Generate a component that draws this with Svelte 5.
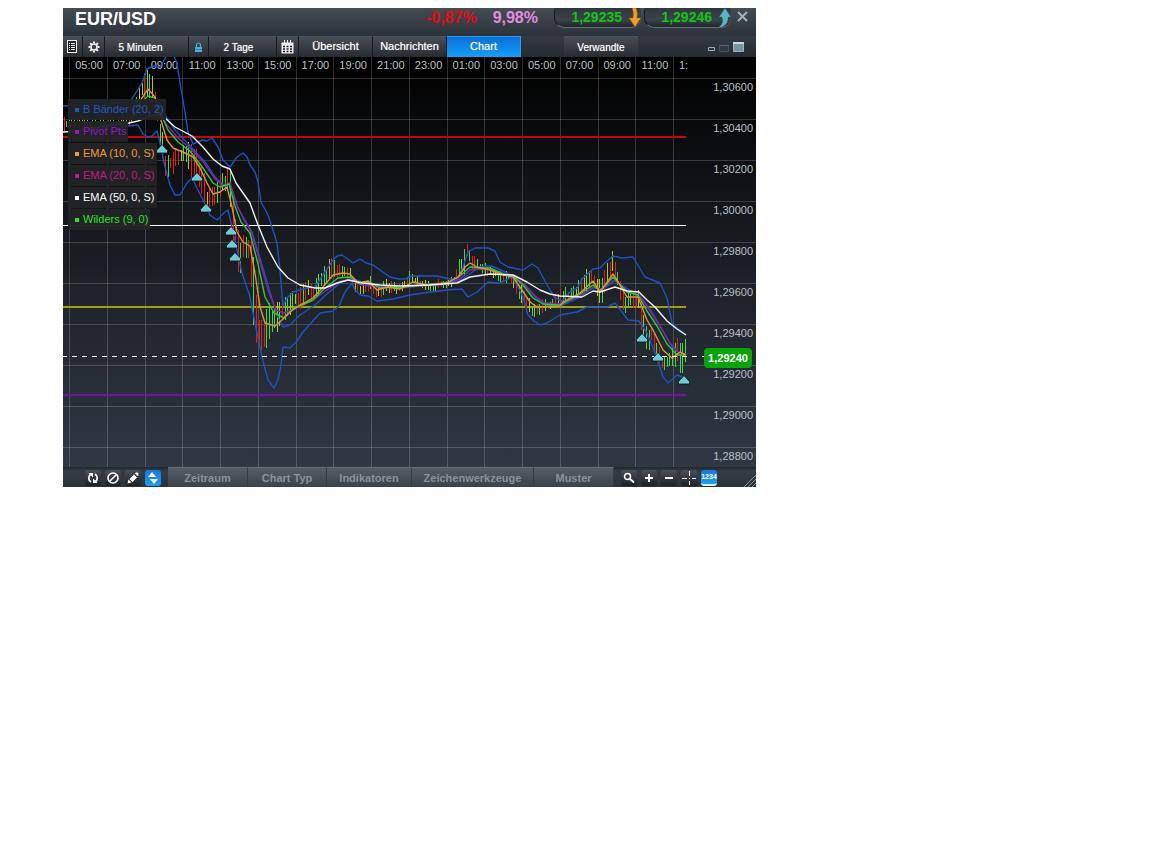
<script>
  let activeTab = 'Chart';
  const tabs = ['Übersicht', 'Nachrichten', 'Chart'];

  const menus = [
    { label: 'Zeitraum', width: 80 },
    { label: 'Chart Typ', width: 79 },
    { label: 'Indikatoren', width: 85 },
    { label: 'Zeichenwerkzeuge', width: 122 },
    { label: 'Muster', width: 80 },
  ];

  const indicators = [
    { label: 'B Bänder (20, 2)', color: '#2058c4' },
    { label: 'Pivot Pts', color: '#9418c4' },
    { label: 'EMA (10, 0, S)', color: '#f09a3c' },
    { label: 'EMA (20, 0, S)', color: '#c41884' },
    { label: 'EMA (50, 0, S)', color: '#ffffff' },
    { label: 'Wilders (9, 0)', color: '#2fe02f' },
  ];

  const hours = ['05:00', '07:00', '09:00', '11:00', '13:00', '15:00', '17:00', '19:00', '21:00', '23:00', '01:00', '03:00', '05:00', '07:00', '09:00', '11:00'];
  const prices = ['1,30600', '1,30400', '1,30200', '1,30000', '1,29800', '1,29600', '1,29400', '1,29200', '1,29000', '1,28800'];
  const columns = Array.from({ length: 17 }, (_, i) => Math.round(69 + i * 37.75) + 0.5);

  const pivots = [
    { y: 137, color: '#c80808', width: 2 },
    { y: 225.5, color: '#ffffff', width: 1 },
    { y: 307, color: '#a09c18', width: 2 },
    { y: 395, color: '#7411a4', width: 2 },
  ];

  const lines = [
    { color: '#1c52c8', points: '63,106 110,104 130,102 142,83 147,69 153,66 160,67 164,60 168,52 172,52 177,63 180,83 185,112 188,132 193,144 202,140 207,141 212,138 218,147 223,160 230,167 237,157 243,153 247,157 250,165 255,172 258,182 261,202 268,215 273,230 277,243 280,270 283,306 287,298 293,292 307,288 315,287 323,275 333,260 337,256 342,255 348,259 353,263 360,259 366,263 373,265 383,272 390,277 399,279 405,279 412,276 437,276 450,279 458,279 463,267 468,252 475,248 488,248 495,251 500,262 508,267 523,270 532,264 538,268 547,285 555,298 562,301 570,292 577,288 583,278 593,269 600,268 606,262 613,256 622,258 633,257 645,277 660,283 667,298 672,323 677,328 686,335' },
    { color: '#1c52c8', points: '128,126 138,125 143,134 148,137 152,136 157,131 160,143 165,167 170,185 175,195 180,195 187,183 192,178 203,200 210,215 217,220 225,212 228,210 232,227 242,273 250,297 255,323 262,357 268,380 274,388 278,380 281,365 283,347 290,348 297,341 303,332 312,322 320,313 333,311 339,306 345,292 352,283 355,290 360,295 368,296 377,301 393,299 410,295 423,293 447,290 462,289 468,297 477,292 488,282 500,283 512,277 518,287 523,297 528,315 534,321 540,325 547,323 560,315 577,312 587,307 607,307 615,303 622,312 628,320 639,321 647,333 655,353 663,377 668,383 677,375 682,377' },
    { color: '#1c52c8', points: '158,103 165,115 175,130 190,146 205,162 215,177 224,186 230,184 238,208 252,232 262,265 270,292 277,315 283,327 290,325 300,315 315,305 328,293 340,283 352,278 363,283 380,286 400,288 420,285 447,283 460,281 468,275 480,267 492,266 505,272 515,277 526,287 538,300 548,305 560,306 580,297 593,288 603,289 615,281 628,289 640,296 652,312 663,331 672,347 680,354 686,355' },
    { color: '#8c1fa8', points: '150,100 158,106 166,124 178,138 191,149 204,163 215,179 222,185 230,183 237,205 244,220 251,231 260,262 269,293 276,310 284,313 294,309 313,300 327,290 340,281 352,280 362,285 380,287 400,288 420,286 447,284 460,279 470,270 481,269 492,269 505,274 515,277 525,285 535,296 545,303 560,304 580,296 593,287 601,290 614,280 628,291 640,296 650,311 660,326 670,343 679,353 686,354' },
    { color: '#28d028', points: '143,101 148,96 155,98 160,112 168,130 178,142 190,151 203,168 213,183 220,187 229,184 235,206 241,222 250,233 258,264 265,297 274,313 284,318 293,309 313,300 325,288 338,278 350,277 360,284 370,282 380,288 393,287 400,288 410,286 425,285 447,283 460,276 470,267 480,268 490,268 503,274 513,276 523,285 533,298 543,304 560,305 580,294 593,285 600,291 613,277 627,292 638,295 647,311 657,326 667,344 677,355 686,355' },
    { color: '#e09434', points: '138,108 142,98 148,89 155,97 160,117 167,140 173,148 183,152 193,157 200,168 207,183 213,194 220,192 227,187 232,207 237,232 243,242 250,246 255,273 260,307 265,323 275,326 282,320 290,312 300,305 313,298 323,287 333,275 343,273 350,274 358,283 368,281 377,290 387,287 400,289 413,282 427,285 447,283 458,277 465,267 470,263 477,267 490,270 503,275 513,277 522,290 530,302 537,307 560,306 563,302 580,293 593,281 600,292 613,274 617,280 627,297 638,297 647,320 653,330 663,350 672,358 680,352 686,355' },
    { color: '#f0f2f2', points: '63,132 80,131 105,126 129,123 138,121 150,116 158,115 165,118 175,127 192,136 203,147 213,159 222,166 230,169 236,183 250,203 258,225 267,247 278,267 288,278 300,285 315,288 325,288 337,283 348,280 363,283 380,285 400,286 430,285 457,283 470,277 490,274 513,275 527,282 540,290 550,294 560,296 582,297 593,291 600,292 615,287 627,291 639,292 647,300 655,307 667,321 677,329 686,335' },
  ];

  // x, high, low
  const range = [
    [63, 117, 132], [72, 117, 127], [129, 119, 127], [134, 105, 122], [138, 86, 118], [143, 65, 100],
    [147, 67, 98], [152, 74, 105], [157, 93, 128], [161, 118, 162], [165, 147, 184], [170, 150, 176],
    [185, 141, 167], [190, 141, 178], [196, 148, 186], [203, 162, 212], [207, 183, 217], [213, 186, 210],
    [220, 174, 200], [228, 166, 192], [231, 172, 238], [235, 208, 264], [240, 238, 278], [243, 232, 264],
    [250, 236, 266], [252, 238, 345], [254, 275, 352], [258, 308, 352], [262, 322, 359], [267, 302, 350],
    [275, 303, 334], [285, 293, 328], [293, 287, 312], [300, 286, 311], [307, 270, 305], [313, 282, 305],
    [320, 270, 296], [327, 260, 286], [333, 255, 278], [340, 263, 282], [348, 261, 284], [356, 283, 296],
    [360, 283, 299], [370, 274, 290], [377, 284, 301], [387, 278, 295], [400, 283, 294], [405, 276, 290],
    [410, 270, 286], [420, 278, 289], [430, 280, 292], [447, 278, 289], [455, 273, 286], [458, 262, 282],
    [464, 243, 276], [467, 238, 260], [472, 252, 273], [480, 260, 274], [490, 266, 277], [500, 269, 284],
    [510, 272, 282], [516, 276, 298], [525, 290, 313], [533, 302, 319], [540, 299, 315], [550, 299, 310],
    [560, 288, 308], [575, 283, 303], [587, 266, 294], [593, 268, 287], [600, 278, 310], [604, 256, 302],
    [610, 260, 282], [613, 244, 278], [618, 271, 293], [624, 288, 319], [630, 289, 308], [638, 287, 308],
    [641, 296, 336], [647, 326, 355], [652, 325, 345], [658, 342, 368], [664, 352, 377], [670, 350, 372],
    [676, 334, 368], [680, 338, 374], [684, 332, 380], [687, 338, 354],
  ];

  const barColors = { up: '#3fdc3f', down: '#e81c10', flat: '#a4d01e' };

  function noise(n) {
    const v = Math.sin(n * 12.9898) * 43758.5453;
    return v - Math.floor(v);
  }

  function between(x) {
    const i = Math.max(1, range.findIndex(r => r[0] >= x));
    const a = range[i - 1];
    const b = range[i];
    const t = (x - a[0]) / (b[0] - a[0]);
    return { high: a[1] + (b[1] - a[1]) * t, low: a[2] + (b[2] - a[2]) * t };
  }

  function buildBars() {
    const bars = [];
    for (let i = 0; 64 + i * 2.6 < 687; i++) {
      const x = Math.floor(64 + i * 2.6);
      const { high, low } = between(x);
      const size = low - high;
      const falling = between(Math.min(x + 3, 687)).high > high + 1;
      const pick = noise(i + 7);
      const kind = pick > 0.76 ? 'flat' : pick > (falling ? 0.5 : 0.32) ? 'up' : 'down';
      bars.push({
        x,
        y: Math.round(high + noise(i) * size * 0.32),
        bottom: Math.round(low - noise(i + 400) * size * 0.32),
        color: barColors[kind],
      });
    }
    return bars;
  }

  const bars = buildBars();

  const markers = [[162, 149], [197, 177], [206, 208], [231, 231], [232, 244], [235, 257], [642, 338], [658, 357], [684, 380]];
</script>

<main class="widget">
  <header>
    <h1>EUR/USD</h1>
    <span class="change down">-0,87%</span>
    <span class="change vola">9,98%</span>
    <button class="price">1,29235
      <svg width="12" height="20" viewBox="0 0 12 20"><path d="M3 0h4q2 4 1 10h4l-6 9-6-9h4q1-6-1-10z" fill="#f0a020" stroke="#8c5410" stroke-width=".5" /></svg>
    </button>
    <button class="price">1,29246
      <svg width="12" height="20" viewBox="0 0 12 20"><path d="M6 0l6 9H9q1 7-6 10H0q5-4 3-10H0z" fill="#58b6c4" stroke="#245e6c" stroke-width=".5" /></svg>
    </button>
    <button class="close" aria-label="Schließen">
      <svg width="11" height="11" viewBox="0 0 11 11"><path d="M1 1l9 9M10 1l-9 9" stroke="#9fb4c2" stroke-width="2" /></svg>
    </button>
  </header>

  <nav class="toolbar">
    <button class="cell list" aria-label="Liste">
      <svg width="12" height="14" viewBox="0 0 12 14"><rect x="1.5" y=".5" width="9" height="12" fill="#222" stroke="#eee" /><path d="M3 3.5h1M5 3.5h4M3 5.5h1M5 5.5h4M3 7.5h1M5 7.5h4M3 9.5h1M5 9.5h4" stroke="#eee" /></svg>
    </button>
    <button class="cell gear" aria-label="Einstellungen">
      <svg width="12" height="12" viewBox="0 0 12 12"><circle cx="6" cy="6" r="3" fill="none" stroke="#eee" stroke-width="1.6" /><path d="M6 .5v2M6 9.5v2M.5 6h2M9.5 6h2M2.1 2.1l1.4 1.4M8.5 8.5l1.4 1.4M9.900 2.100L8.500 3.500M3.500 8.500L2.100 9.900" stroke="#eee" stroke-width="2" /></svg>
    </button>
    <button class="cell interval">5 Minuten</button>
    <button class="cell lock" aria-label="Sperren">
      <svg width="9" height="11" viewBox="0 0 9 11"><path d="M2.5 5V3a2 2 0 014 0v2" fill="none" stroke="#48b0e4" stroke-width="1.2" /><path d="M1 5h7v5H1z" fill="#48b0e4" /><path d="M1 7.500h7" stroke="#2a80b0" /></svg>
    </button>
    <button class="cell span">2 Tage</button>
    <button class="cell calendar" aria-label="Kalender">
      <svg width="13" height="14" viewBox="0 0 13 14"><path d="M.5 2.5h12v11H.5z" fill="#eee" /><path d="M3.5 0v4M6.5 0v4M9.5 0v4" stroke="#eee" /><path d="M2 6.5h2M5.5 6.5h2M9 6.5h2M2 9h2M5.5 9h2M9 9h2M2 11.5h2M5.5 11.5h2M9 11.5h2" stroke="#222" stroke-width="1.5" /></svg>
    </button>
    {#each tabs as tab}
      <button class="cell tab" class:active={tab === activeTab} on:click={() => (activeTab = tab)}>{tab}</button>
    {/each}
    <button class="cell related">Verwandte</button>
    <div class="sizes">
      <button aria-label="Klein"><svg width="7" height="10" viewBox="0 0 7 10"><path d="M.5 5.5h6v3h-6z" fill="none" stroke="#9ab2c0" /></svg></button>
      <button aria-label="Mittel"><svg width="10" height="10" viewBox="0 0 10 10"><path d="M.5 3.5h9v6h-9z" fill="#303a44" stroke="#46525e" /><path d="M0 3.5h10" stroke="#586672" /></svg></button>
      <button aria-label="Groß"><svg width="11" height="10" viewBox="0 0 11 10"><path d="M.5.5h10v9H.5z" fill="#7895a6" stroke="#9ab2c0" /><path d="M0 1h11" stroke="#c8d8e0" stroke-width="2" /></svg></button>
    </div>
  </nav>

  <section class="chart">
    <svg class="plot" viewBox="63 57 693 410" role="img" aria-label="EUR/USD Chart">
      {#each columns as x}
        <path class="grid" d="M{x} 57V467" />
      {/each}
      {#each prices as price, i}
        <path class="grid" d="M63 {78.5 + i * 41}H756" />
      {/each}

      {#each hours as hour, i}
        <text class="axis" x={89 + i * 37.73} y="69" text-anchor="middle">{hour}</text>
      {/each}
      <text class="axis" x="679" y="69">1:</text>
      {#each prices as price, i}
        <text class="axis" x="753" y={91 + i * 41} text-anchor="end">{price}</text>
      {/each}

      {#each pivots as pivot}
        <path d="M63 {pivot.y}H686" stroke={pivot.color} stroke-width={pivot.width} />
      {/each}
      {#each bars as bar}
        <path d="M{bar.x + 0.5} {bar.y}V{bar.bottom}" stroke={bar.color} />
      {/each}
      {#each lines as line}
        <polyline points={line.points} fill="none" stroke={line.color} stroke-width="1.4" stroke-linejoin="round" />
      {/each}
      <path d="M62 356.5H704" stroke="#fff" stroke-dasharray="5 5" />

      {#each markers as [x, y]}
        <path d="M{x} {y - 4.5}L{x + 5.5} {y + 1.5}V{y + 4}H{x - 5.5}V{y + 1.5}Z" fill="#6cccd4" stroke="#0a1014" stroke-width=".8" />
      {/each}

      <rect x="704" y="348" width="48" height="20" rx="4" fill="#08a408" />
      <text class="last" x="728" y="362" text-anchor="middle">1,29240</text>
    </svg>

    <ul class="legend">
      {#each indicators as item}
        <li style="color: {item.color}">{item.label}</li>
      {/each}
    </ul>
  </section>

  <footer>
    <div class="tools left">
      <button aria-label="Aktualisieren"><svg viewBox="0 0 16 16"><path d="M6 4C3 6 3 10 6 12M10 12c3-2 3-6 0-8" fill="none" stroke="#fff" stroke-width="1.8" /><path d="M3.5 3H8v4.5zM12.5 13H8V8.5z" fill="#fff" /></svg></button>
      <button aria-label="Löschen"><svg viewBox="0 0 16 16"><circle cx="8" cy="8" r="5" fill="none" stroke="#fff" stroke-width="1.6" /><path d="M5 11l6-6" stroke="#fff" stroke-width="1.6" /></svg></button>
      <button aria-label="Zeichnen"><svg viewBox="0 0 16 16"><path d="M2.5 13.5l1-4 3 3zM4.500 9l4.500-4.500 3 3L7.500 12zM10 3.500l1-1h1.500l1 1V5l-1 1z" fill="#fff" /></svg></button>
      <button class="on" aria-label="Skalieren"><svg viewBox="0 0 16 16"><path d="M3 7l4-5 4 5zM5 9h8l-4 5z" fill="#fff" /></svg></button>
    </div>
    {#each menus as menu}
      <button class="menu" style="flex-basis: {menu.width}px">{menu.label}</button>
    {/each}
    <div class="tools right">
      <button aria-label="Lupe"><svg viewBox="0 0 16 16"><circle cx="6.5" cy="6.5" r="3" fill="none" stroke="#fff" stroke-width="1.5" /><path d="M9 9l4 3.5" stroke="#fff" stroke-width="2" /></svg></button>
      <button aria-label="Vergrößern"><svg viewBox="0 0 16 16"><path d="M8 4v8M4 8h8" stroke="#fff" stroke-width="2" /></svg></button>
      <button aria-label="Verkleinern"><svg viewBox="0 0 16 16"><path d="M4 8h8" stroke="#fff" stroke-width="2" /></svg></button>
      <button aria-label="Fadenkreuz"><svg viewBox="0 0 16 16"><path d="M8.5 1v5M8.5 11v4M1 8.5h5M11 8.5h4M8 8.5h1" stroke="#eee" /></svg></button>
      <button class="on digits">1234</button>
    </div>
    <svg class="grip" width="12" height="12" viewBox="0 0 12 12"><path d="M0 12L12 0M4 12l8-8M8 12l4-4" stroke="#87919b" /></svg>
  </footer>
</main>

<style>
  :global(body) {
    background: #fff;
  }

  .widget {
    max-width: 693px;
    margin: 8px 63px;
    font-family: "Liberation Sans", Arial, sans-serif;
    color: #fff;
    background: #2b3038;
  }

  button {
    margin: 0;
    padding: 0;
    border: 0;
    background: none;
    color: inherit;
    font: inherit;
    cursor: pointer;
  }

  svg {
    display: block;
  }

  header {
    display: flex;
    align-items: flex-start;
    height: 28px;
    background: linear-gradient(#454c54, #2c323a);
  }

  h1 {
    flex: 1;
    margin: 0;
    padding-left: 12px;
    font-size: 18px;
    line-height: 22px;
  }

  .change {
    margin-right: 16px;
    font-size: 16px;
    font-weight: bold;
    line-height: 19px;
  }

  .down {
    color: #e00c14;
  }

  .vola {
    color: #e48ce0;
  }

  .price {
    display: flex;
    justify-content: flex-end;
    gap: 7px;
    box-sizing: border-box;
    width: 87px;
    height: 20px;
    margin-right: 3px;
    border-bottom: 1px solid #68717a;
    border-left: 1px solid #15191d;
    border-radius: 3px 3px 10px 10px;
    background: linear-gradient(#30363e, #3b424a 60%, #22272d);
    color: #12c412;
    font-size: 14px;
    font-weight: bold;
    line-height: 19px;
  }

  .close {
    margin: 3px 8px 0 3px;
  }

  .toolbar {
    display: flex;
    height: 21px;
    background: linear-gradient(#343a43, #262b32);
  }

  .cell {
    display: flex;
    align-items: center;
    justify-content: center;
    box-sizing: border-box;
    border-top: 1px solid #4c525a;
    border-right: 1px solid #15181c;
    background: linear-gradient(#474d54, #282c31);
    font-size: 10px;
    text-shadow: 0 0 1px #aaa;
  }

  .list {
    width: 20px;
    padding-right: 2px;
  }

  .gear {
    width: 22px;
  }

  .interval {
    width: 84px;
    padding-right: 12px;
  }

  .lock {
    width: 20px;
  }

  .span {
    width: 68px;
    padding-right: 8px;
  }

  .calendar {
    width: 22px;
  }

  .tab {
    width: 74px;
    padding-bottom: 3px;
    font-size: 11px;
  }

  .tab.active {
    border-color: #2f9cf0;
    background: linear-gradient(#0a6fd8, #14a0f8);
  }

  .related {
    width: 74px;
    margin-left: 43px;
    border-right: 0;
  }

  .sizes {
    display: flex;
    align-items: center;
    gap: 4px;
    margin-left: auto;
    padding-right: 12px;
  }

  .chart {
    position: relative;
    background: linear-gradient(#000, #101216 30%, #1f242b 60%, #303844);
  }

  .plot {
    width: 100%;
    height: auto;
  }

  .grid {
    stroke: #fff;
    stroke-opacity: 0.18;
  }

  .axis {
    fill: #bcc0c4;
    font-size: 11px;
  }

  .last {
    fill: #fff;
    font-size: 11px;
    font-weight: bold;
  }

  .legend {
    position: absolute;
    top: 42px;
    left: 5px;
    display: flex;
    flex-direction: column;
    align-items: flex-start;
    gap: 1px;
    margin: 0;
    padding: 0;
    list-style: none;
    font-size: 11px;
    line-height: 21px;
  }

  .legend li {
    display: flex;
    align-items: center;
    gap: 4px;
    padding: 0 2px 0 7px;
    background: rgba(34, 35, 37, 0.96);
  }

  .legend li::before {
    content: "";
    width: 4px;
    height: 4px;
    background: currentColor;
  }

  footer {
    display: flex;
    height: 20px;
    background: linear-gradient(#20262c, #343c45 4px, #2b3138);
  }

  .tools {
    display: flex;
    align-items: center;
    gap: 4px;
    padding-top: 2px;
  }

  .tools button {
    width: 16px;
    height: 16px;
    border-radius: 3px;
    background: linear-gradient(#4a5056, #1d2125);
  }

  .tools .on {
    background: linear-gradient(#1878d8, #18a0f0);
  }

  .tools .digits {
    border-bottom: 2px solid #d8f0ff;
    box-sizing: border-box;
    font-size: 7px;
    font-weight: bold;
    line-height: 12px;
  }

  .left {
    padding-left: 22px;
    padding-right: 7px;
  }

  .right {
    padding-left: 7px;
  }

  .menu {
    flex-grow: 0;
    flex-shrink: 1;
    box-sizing: border-box;
    border-top: 1px solid #697079;
    border-right: 1px solid #353c44;
    background: linear-gradient(#565d65, #3a4148);
    color: #89929b;
    font-size: 11px;
    font-weight: bold;
  }

  .grip {
    align-self: flex-end;
    margin-left: auto;
  }
</style>
